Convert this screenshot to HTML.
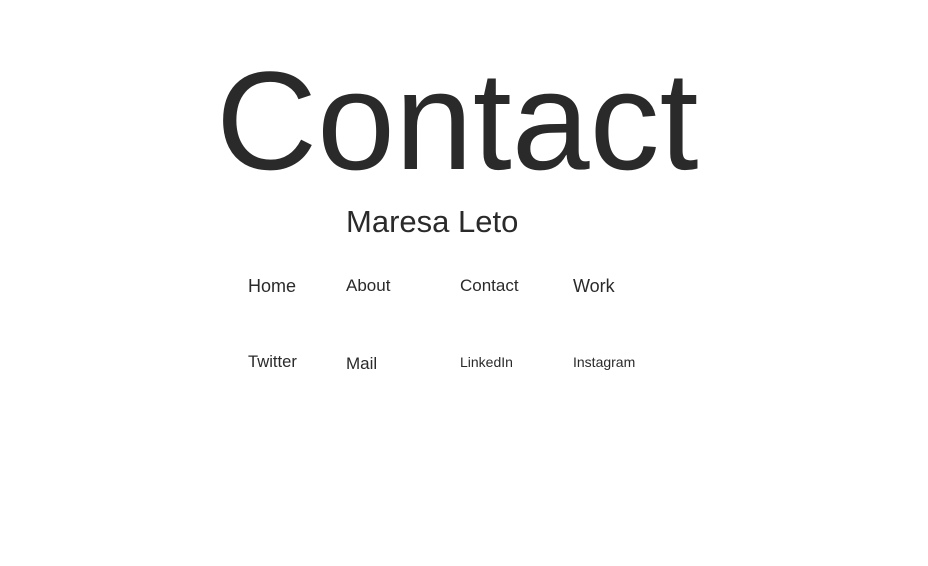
<!DOCTYPE html>
<html><head><meta charset="utf-8"><style>
html,body{margin:0;padding:0;background:#fff;width:928px;height:566px;overflow:hidden}
div{position:absolute;font-family:"Liberation Sans",Arial,sans-serif;color:#2a2a2a;line-height:1;white-space:nowrap}
</style></head><body>
<div style="left:216px;top:51px;font-size:140px">Contact</div>
<div style="left:346px;top:206px;font-size:31px">Maresa Leto</div>
<div style="left:248px;top:277px;font-size:18px">Home</div>
<div style="left:346px;top:277px;font-size:17px">About</div>
<div style="left:460px;top:277px;font-size:17px">Contact</div>
<div style="left:573px;top:277px;font-size:18px">Work</div>
<div style="left:248px;top:354px;font-size:16.6px">Twitter</div>
<div style="left:346px;top:355px;font-size:17px">Mail</div>
<div style="left:460px;top:355px;font-size:14px">LinkedIn</div>
<div style="left:573px;top:355px;font-size:14px">Instagram</div>
</body></html>
